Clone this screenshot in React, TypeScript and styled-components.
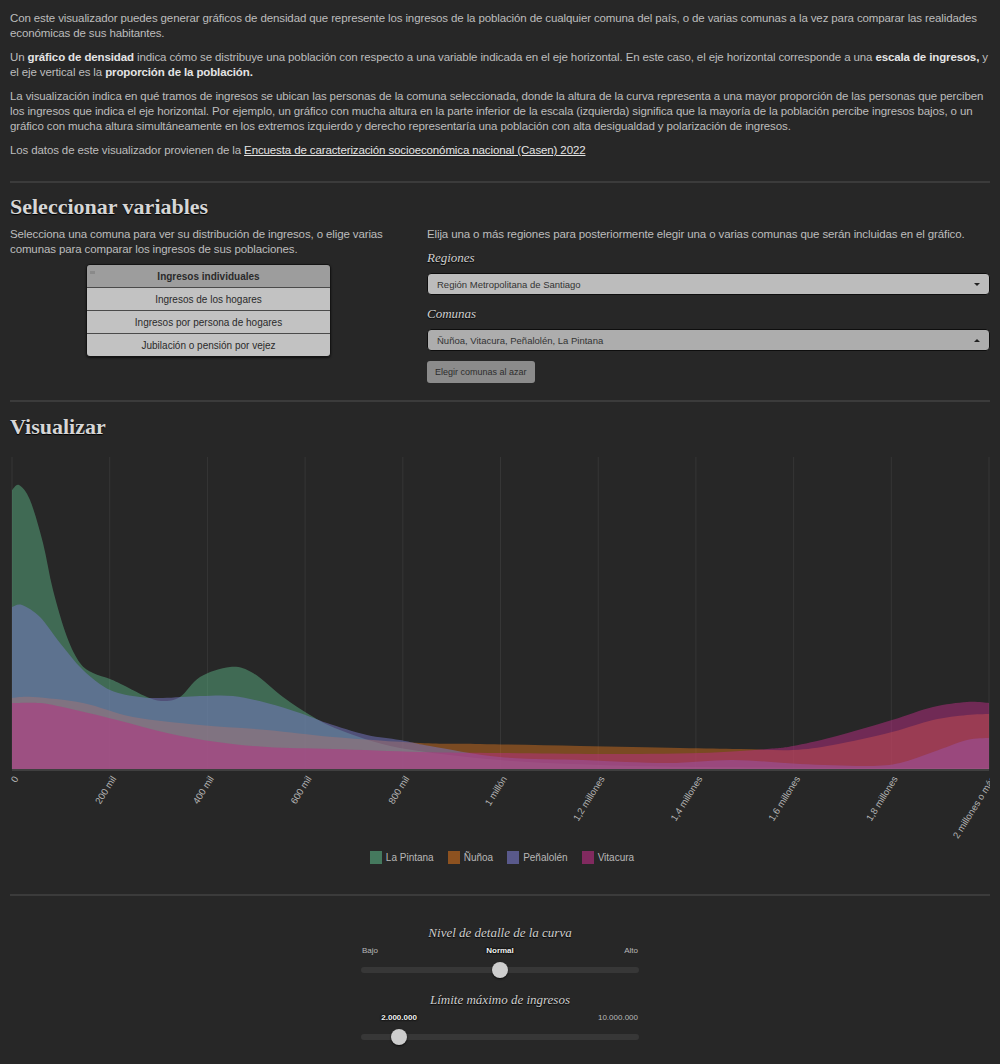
import React from 'react';
import styled, { createGlobalStyle } from 'styled-components';

const GlobalStyle = createGlobalStyle`
  body {
    margin: 0;
    background: #272727;
    color: #bdbdbd;
    font-family: "Liberation Sans", Arial, sans-serif;
  }
`;

const Page = styled.div`
  padding: 11px 10px 20px;
`;

const Intro = styled.p`
  margin: 0 0 9px;
  font-size: 11.5px;
  letter-spacing: -0.12px;
  line-height: 15px;
  color: #bdbdbd;

  b {
    color: #e4e4e4;
  }

  a {
    color: #e4e4e4;
    text-decoration: underline;
  }
`;

const Divider = styled.hr<{ $top: number; $bottom: number }>`
  border: 0;
  height: 2px;
  background: #3b3b3b;
  margin: ${p => p.$top}px 0 ${p => p.$bottom}px;
`;

const Heading = styled.h2`
  margin: 0;
  font-family: "Liberation Serif", "Times New Roman", serif;
  font-weight: bold;
  font-size: 22px;
  line-height: 25px;
  color: #d6d6d6;
  text-shadow: 0 1px 1px #000;
`;

const Columns = styled.div`
  display: grid;
  grid-template-columns: 397px 1fr;
  column-gap: 20px;
  margin-top: 8px;
`;

const Column = styled.div`
  display: flex;
  flex-direction: column;
`;

const Note = styled.p`
  margin: 0;
  font-size: 11.5px;
  letter-spacing: -0.12px;
  line-height: 15px;
  color: #bdbdbd;
`;

const Group = styled.div`
  align-self: center;
  width: 243px;
  margin-top: 7px;
  display: flex;
  flex-direction: column;
  border: 1px solid #141414;
  border-radius: 4px;
  overflow: hidden;
  box-shadow: 0 1px 2px rgba(0, 0, 0, 0.6);
`;

const GroupItem = styled.div<{ $active?: boolean }>`
  position: relative;
  height: 22px;
  display: flex;
  align-items: center;
  justify-content: center;
  font-size: 10px;
  color: #2a2a2a;
  font-weight: ${p => (p.$active ? 'bold' : 'normal')};
  background: ${p => (p.$active ? '#9d9d9d' : '#c2c2c2')};
  border-top: 1px solid #4a4a4a;

  &:first-child {
    border-top: 0;
  }
`;

const Marker = styled.span`
  position: absolute;
  left: 3px;
  top: 6px;
  width: 5px;
  height: 3px;
  background: #8a8a8a;
`;

const Label = styled.div<{ $gap: number }>`
  margin-top: ${p => p.$gap}px;
  font-family: "Liberation Serif", "Times New Roman", serif;
  font-style: italic;
  font-size: 13px;
  line-height: 16px;
  color: #d0d0d0;
  text-shadow: 0 1px 1px #000;
`;

const Select = styled.div<{ $open?: boolean }>`
  height: 20px;
  margin-top: 7px;
  display: flex;
  align-items: center;
  justify-content: space-between;
  padding: 0 9px;
  border: 1px solid #0e0e0e;
  border-radius: 4px;
  background: ${p => (p.$open ? '#adadad' : '#bcbcbc')};
  font-size: 9.5px;
  color: #333;
`;

const Caret = styled.span<{ $up?: boolean }>`
  width: 0;
  height: 0;
  border-left: 3px solid transparent;
  border-right: 3px solid transparent;
  ${p =>
    p.$up
      ? 'border-bottom: 3px solid #222;'
      : 'border-top: 3px solid #222;'}
`;

const Button = styled.div`
  align-self: flex-start;
  height: 22px;
  padding: 0 8px;
  display: flex;
  align-items: center;
  margin-top: 10px;
  border-radius: 3px;
  background: #8b8b8b;
  font-size: 9px;
  color: #2d2d2d;
`;

const ChartWrap = styled.div`
  margin-top: 11px;
`;

const ChartSvg = styled.svg`
  display: block;
  overflow: hidden;
`;

const Legend = styled.div`
  display: flex;
  justify-content: center;
  gap: 14px;
  padding-left: 4px;
`;

const LegendItem = styled.div`
  display: flex;
  align-items: center;
  gap: 4px;
  font-size: 10px;
  color: #b8b8b8;
`;

const Swatch = styled.span<{ $color: string }>`
  width: 12px;
  height: 13px;
  background: ${p => p.$color};
  opacity: 0.62;
`;

const Controls = styled.div`
  width: 278px;
  margin: 0 auto;
  display: flex;
  flex-direction: column;
`;

const SliderTitle = styled.div<{ $gap?: number }>`
  margin-top: ${p => p.$gap || 0}px;
  text-align: center;
  font-family: "Liberation Serif", "Times New Roman", serif;
  font-style: italic;
  font-size: 13px;
  line-height: 16px;
  color: #cfcfcf;
  text-shadow: 0 1px 1px #000;
`;

const SliderLabels = styled.div`
  position: relative;
  height: 10px;
  margin-top: 5px;
  display: flex;
  justify-content: space-between;
  font-size: 8px;
  line-height: 10px;
  color: #b8b8b8;
  padding: 0 1px;
`;

const ValueLabel = styled.span`
  position: absolute;
  top: 0;
  transform: translateX(-50%);
  font-weight: bold;
  color: #f2f2f2;
  text-shadow: 0 0 2px #000, 0 0 2px #000;
`;

const Hidden = styled.span`
  visibility: hidden;
`;

const Track = styled.div`
  position: relative;
  height: 20px;
  margin-top: 4px;
  display: flex;
  align-items: center;

  &::before {
    content: '';
    flex: 1;
    height: 6px;
    border-radius: 3px;
    background: #373737;
  }
`;

const Thumb = styled.span`
  position: absolute;
  top: 2px;
  width: 16px;
  height: 16px;
  margin-left: -8px;
  border-radius: 50%;
  background: #cdcdcd;
  box-shadow: 0 1px 2px rgba(0, 0, 0, 0.7);
`;

type Pt = [number, number];

const series: { name: string; color: string; pts: Pt[] }[] = [
  {
    name: 'La Pintana',
    color: '#59ad81',
    pts: [
      [12, 490], [19, 485], [30, 500], [43, 543], [53, 590], [67, 637], [80, 663],
      [93, 673], [110, 679], [123, 685], [147, 697], [163, 701], [180, 697],
      [200, 677], [230, 667], [253, 673], [283, 697], [310, 715], [340, 730],
      [400, 748], [500, 760], [600, 765], [700, 767], [850, 768], [989, 768],
    ],
  },
  {
    name: 'Ñuñoa',
    color: '#cd6d1d',
    pts: [
      [12, 698], [33, 697], [83, 703], [133, 717], [200, 725], [267, 730],
      [333, 737], [420, 743], [480, 744], [580, 746], [680, 748], [740, 749],
      [793, 750], [833, 745], [892, 732], [933, 720], [967, 715], [989, 714],
    ],
  },
  {
    name: 'Peñalolén',
    color: '#7979c9',
    pts: [
      [12, 607], [22, 605], [40, 617], [60, 643], [83, 670], [110, 690],
      [140, 697], [163, 698], [200, 696], [233, 696], [267, 703], [300, 713],
      [327, 723], [367, 735], [400, 740], [430, 746], [500, 757], [583, 760],
      [667, 763], [733, 760], [800, 764], [867, 766], [900, 763], [933, 752],
      [967, 740], [989, 738],
    ],
  },
  {
    name: 'Vitacura',
    color: '#b92d83',
    pts: [
      [12, 703], [40, 703], [67, 708], [117, 720], [167, 733], [217, 742],
      [267, 747], [333, 749], [420, 752], [500, 753], [600, 754], [700, 753],
      [767, 749], [793, 746], [833, 737], [892, 720], [933, 707], [967, 702],
      [989, 703],
    ],
  },
];

// chart svg sits at page (10, 450); points above are in page pixels
const OX = 10;
const OY = 450;
const BASE = 769 - OY;
const X0 = 12 - OX;
const X1 = 989 - OX;
const TOP = 457 - OY;

const ticks = [
  '0', '200 mil', '400 mil', '600 mil', '800 mil', '1 millón',
  '1,2 millones', '1,4 millones', '1,6 millones', '1,8 millones', '2 millones o más',
];

function areaPath(raw: Pt[]): string {
  const p = raw.map(([x, y]) => [x - OX, y - OY] as Pt);
  let d = `M${p[0][0]},${BASE}L${p[0][0]},${p[0][1]}`;
  for (let i = 0; i < p.length - 1; i++) {
    const p0 = p[i - 1] || p[i];
    const p1 = p[i];
    const p2 = p[i + 1];
    const p3 = p[i + 2] || p2;
    const c1x = p1[0] + (p2[0] - p0[0]) / 6;
    const c1y = p1[1] + (p2[1] - p0[1]) / 6;
    const c2x = p2[0] - (p3[0] - p1[0]) / 6;
    const c2y = p2[1] - (p3[1] - p1[1]) / 6;
    d += `C${c1x.toFixed(1)},${c1y.toFixed(1)} ${c2x.toFixed(1)},${c2y.toFixed(1)} ${p2[0]},${p2[1]}`;
  }
  d += `L${p[p.length - 1][0]},${BASE}Z`;
  return d;
}

const DensityChart: React.FC = () => {
  const step = (X1 - X0) / 10;
  return (
    <ChartSvg width={980} height={401} viewBox="0 0 980 401">
      {ticks.map((_, i) => (
        <line
          key={i}
          x1={X0 + i * step}
          x2={X0 + i * step}
          y1={TOP}
          y2={BASE}
          stroke="#363636"
          strokeWidth={1}
        />
      ))}
      {series.map(s => (
        <path key={s.name} d={areaPath(s.pts)} fill={s.color} fillOpacity={0.5} />
      ))}
      <line x1={X0} x2={X1} y1={BASE + 1} y2={BASE + 1} stroke="#3f3f3f" strokeWidth={2} />
      {ticks.map((t, i) => (
        <text
          key={t}
          transform={`translate(${X0 + i * step + 4},${BASE + 8}) rotate(-58)`}
          textAnchor="end"
          dy="0.35em"
          fontSize={9.5}
          fontFamily='"Liberation Sans", Arial, sans-serif'
          fill="#b5b5b5"
        >
          {t}
        </text>
      ))}
    </ChartSvg>
  );
};

const Slider: React.FC<{
  title: string;
  left: string;
  right: string;
  value: string;
  pos: number;
  gap?: number;
  hideLeft?: boolean;
}> = ({ title, left, right, value, pos, gap, hideLeft }) => (
  <>
    <SliderTitle $gap={gap}>{title}</SliderTitle>
    <SliderLabels>
      {hideLeft ? <Hidden>{left}</Hidden> : <span>{left}</span>}
      <span>{right}</span>
      <ValueLabel style={{ left: `${pos}%` }}>{value}</ValueLabel>
    </SliderLabels>
    <Track>
      <Thumb style={{ left: `${pos}%` }} />
    </Track>
  </>
);

const App: React.FC = () => (
  <Page>
    <GlobalStyle />
    <Intro>
      Con este visualizador puedes generar gráficos de densidad que represente los ingresos de la
      población de cualquier comuna del país, o de varias comunas a la vez para comparar las
      realidades económicas de sus habitantes.
    </Intro>
    <Intro>
      Un <b>gráfico de densidad</b> indica cómo se distribuye una población con respecto a una
      variable indicada en el eje horizontal. En este caso, el eje horizontal corresponde a una{' '}
      <b>escala de ingresos,</b> y el eje vertical es la <b>proporción de la población.</b>
    </Intro>
    <Intro>
      La visualización indica en qué tramos de ingresos se ubican las personas de la comuna
      seleccionada, donde la altura de la curva representa a una mayor proporción de las personas
      que perciben los ingresos que indica el eje horizontal. Por ejemplo, un gráfico con mucha
      altura en la parte inferior de la escala (izquierda) significa que la mayoría de la población
      percibe ingresos bajos, o un gráfico con mucha altura simultáneamente en los extremos
      izquierdo y derecho representaría una población con alta desigualdad y polarización de
      ingresos.
    </Intro>
    <Intro>
      Los datos de este visualizador provienen de la{' '}
      <a href="#casen">Encuesta de caracterización socioeconómica nacional (Casen) 2022</a>
    </Intro>

    <Divider $top={23} $bottom={11} />
    <Heading>Seleccionar variables</Heading>
    <Columns>
      <Column>
        <Note>
          Selecciona una comuna para ver su distribución de ingresos, o elige varias comunas para
          comparar los ingresos de sus poblaciones.
        </Note>
        <Group>
          <GroupItem $active>
            <Marker />
            Ingresos individuales
          </GroupItem>
          <GroupItem>Ingresos de los hogares</GroupItem>
          <GroupItem>Ingresos por persona de hogares</GroupItem>
          <GroupItem>Jubilación o pensión por vejez</GroupItem>
        </Group>
      </Column>
      <Column>
        <Note>
          Elija una o más regiones para posteriormente elegir una o varias comunas que serán
          incluidas en el gráfico.
        </Note>
        <Label $gap={8}>Regiones</Label>
        <Select>
          Región Metropolitana de Santiago
          <Caret />
        </Select>
        <Label $gap={11}>Comunas</Label>
        <Select $open>
          Ñuñoa, Vitacura, Peñalolén, La Pintana
          <Caret $up />
        </Select>
        <Button>Elegir comunas al azar</Button>
      </Column>
    </Columns>

    <Divider $top={17} $bottom={12} />
    <Heading>Visualizar</Heading>
    <ChartWrap>
      <DensityChart />
    </ChartWrap>
    <Legend>
      {series.map(s => (
        <LegendItem key={s.name}>
          <Swatch $color={s.color} />
          {s.name}
        </LegendItem>
      ))}
    </Legend>

    <Divider $top={30} $bottom={29} />
    <Controls>
      <Slider title="Nivel de detalle de la curva" left="Bajo" right="Alto" value="Normal" pos={50} />
      <Slider
        title="Límite máximo de ingresos"
        left="1.000.000"
        right="10.000.000"
        value="2.000.000"
        pos={13.7}
        gap={12}
        hideLeft
      />
    </Controls>
  </Page>
);

export default App;
